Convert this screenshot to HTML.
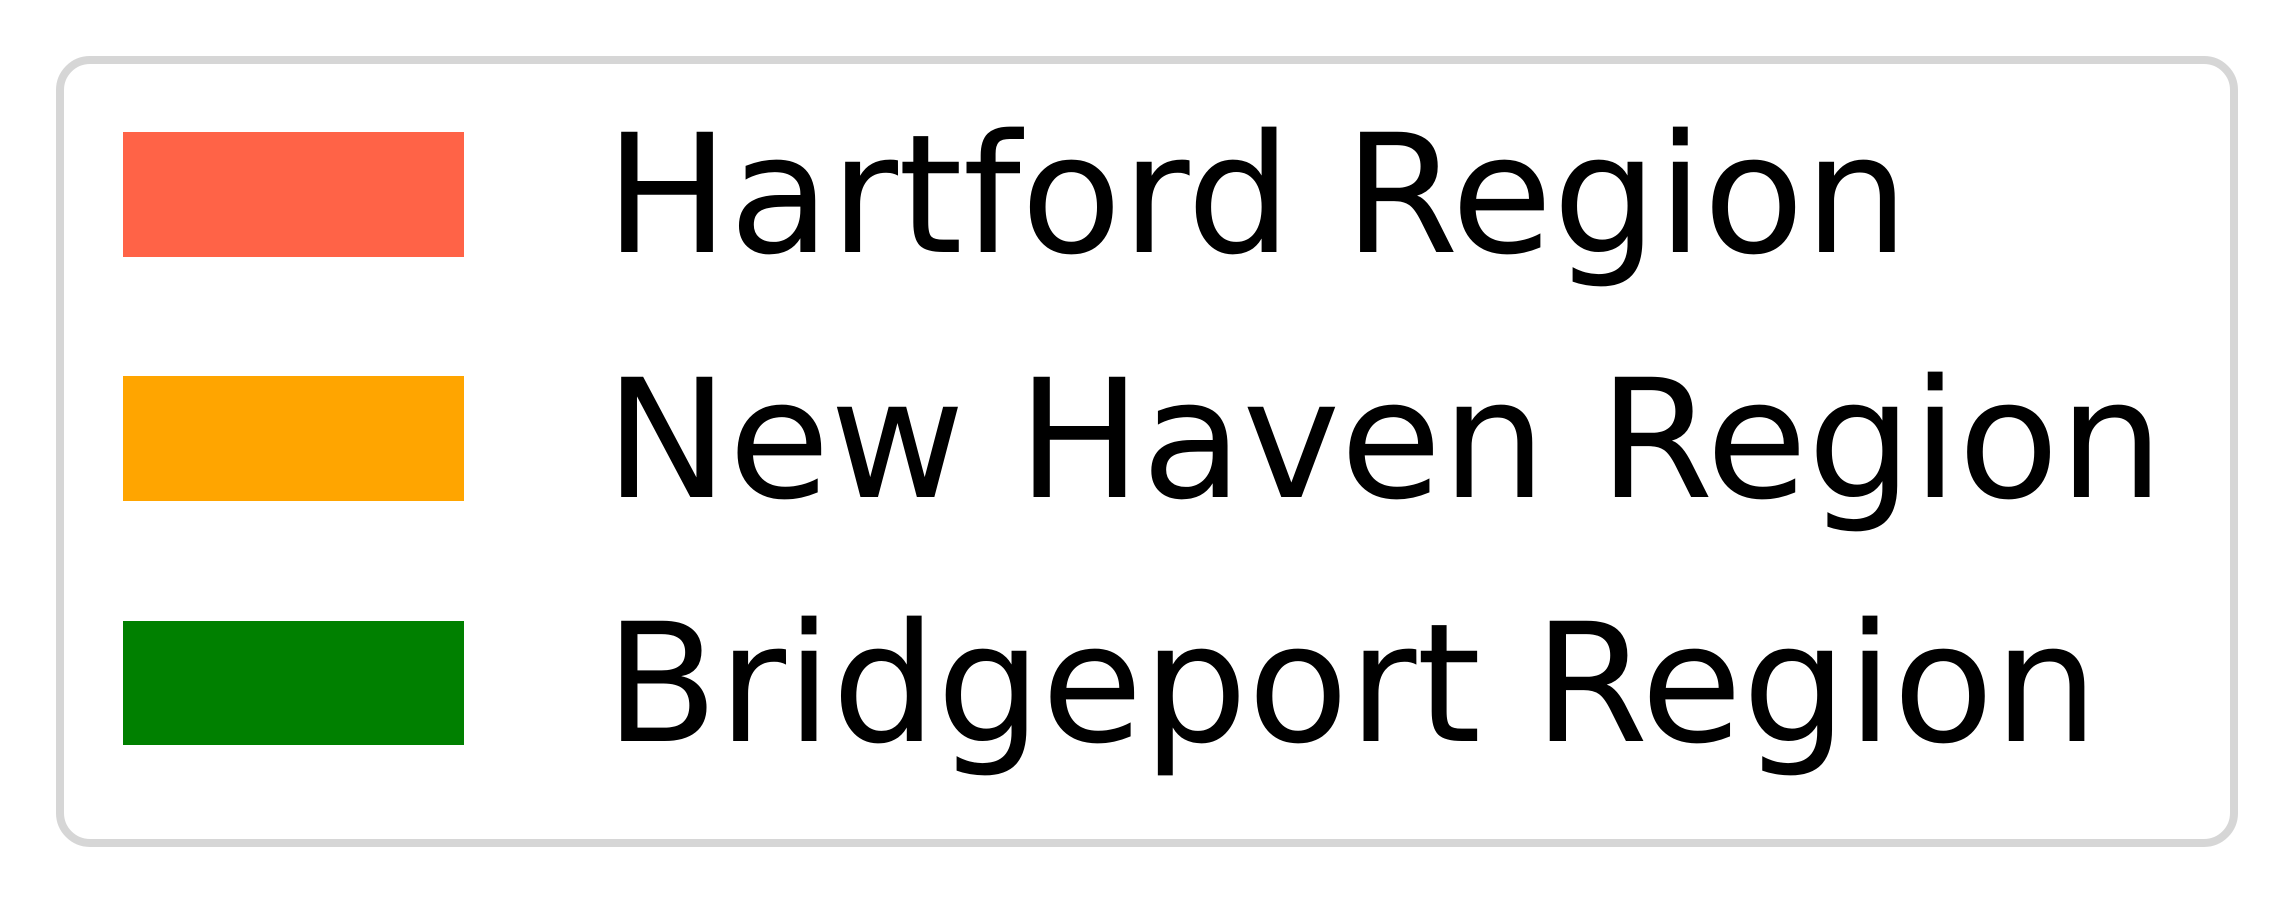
<!DOCTYPE html>
<html><head><meta charset="utf-8"><style>
html,body{margin:0;padding:0;background:#fff;}
svg{display:block;}
</style></head><body>
<svg width="2294" height="903" viewBox="0 0 2294 903" xmlns="http://www.w3.org/2000/svg">
<rect x="0" y="0" width="2294" height="903" fill="#fff"/>
<rect x="60" y="60" width="2174" height="783" rx="30" ry="30" fill="#fff" stroke="#d6d6d6" stroke-width="8"/>
<rect x="123" y="132" width="341" height="125" fill="#ff6347"/>
<rect x="123" y="376" width="341" height="125" fill="#ffa500"/>
<rect x="123" y="621" width="341" height="124" fill="#008000"/>
<g font-family="'DejaVu Sans', 'Liberation Sans', sans-serif" font-size="165" fill="#000">
<text x="605" y="252">Hartford Region</text>
<text x="605" y="497">New Haven Region</text>
<text x="605" y="741">Bridgeport Region</text>
</g>
</svg>
</body></html>
